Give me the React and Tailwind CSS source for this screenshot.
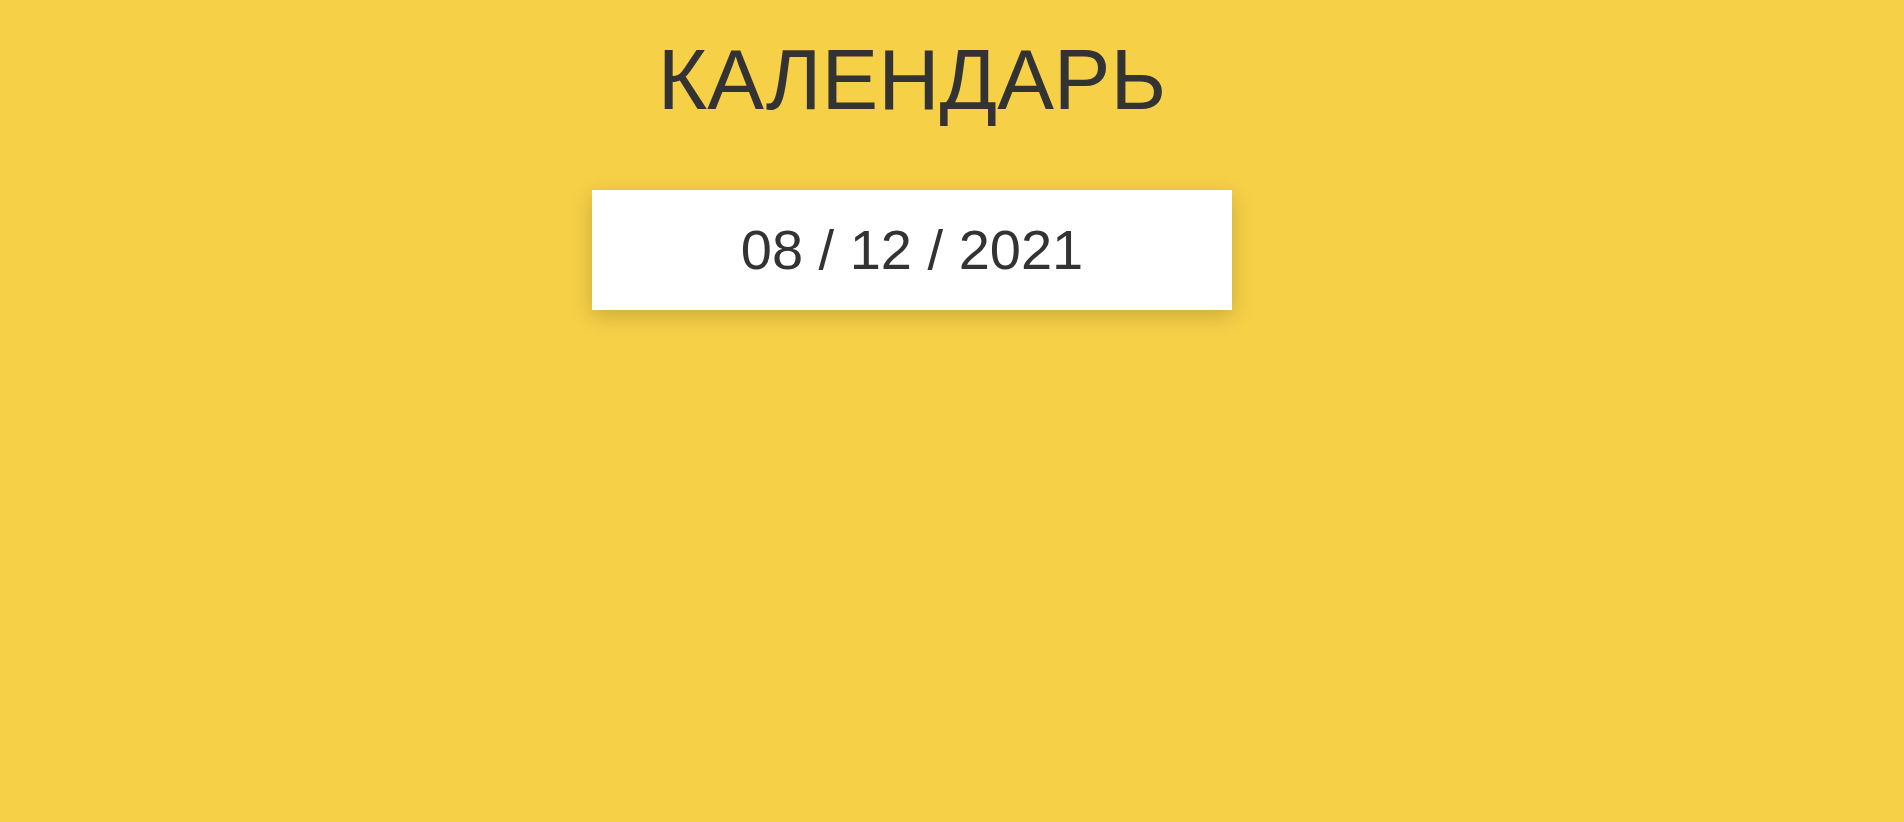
export default function App() {
  return (
    <div
      className="min-h-screen w-full bg-[#f6d047] text-[#333333]"
      style={{ fontFamily: '"Liberation Sans", Arial, sans-serif' }}
    >
      <div className="flex flex-col items-center pr-[80px]">
        <h1 className="mt-[37px] text-[85px] leading-none font-normal">КАЛЕНДАРЬ</h1>
        <div className="mt-[68px] flex h-[120px] w-[640px] items-center justify-center bg-white shadow-[0_6px_20px_rgba(0,0,0,0.18)]">
          <span className="text-[56px] leading-none">08 / 12 / 2021</span>
        </div>
      </div>
    </div>
  );
}
